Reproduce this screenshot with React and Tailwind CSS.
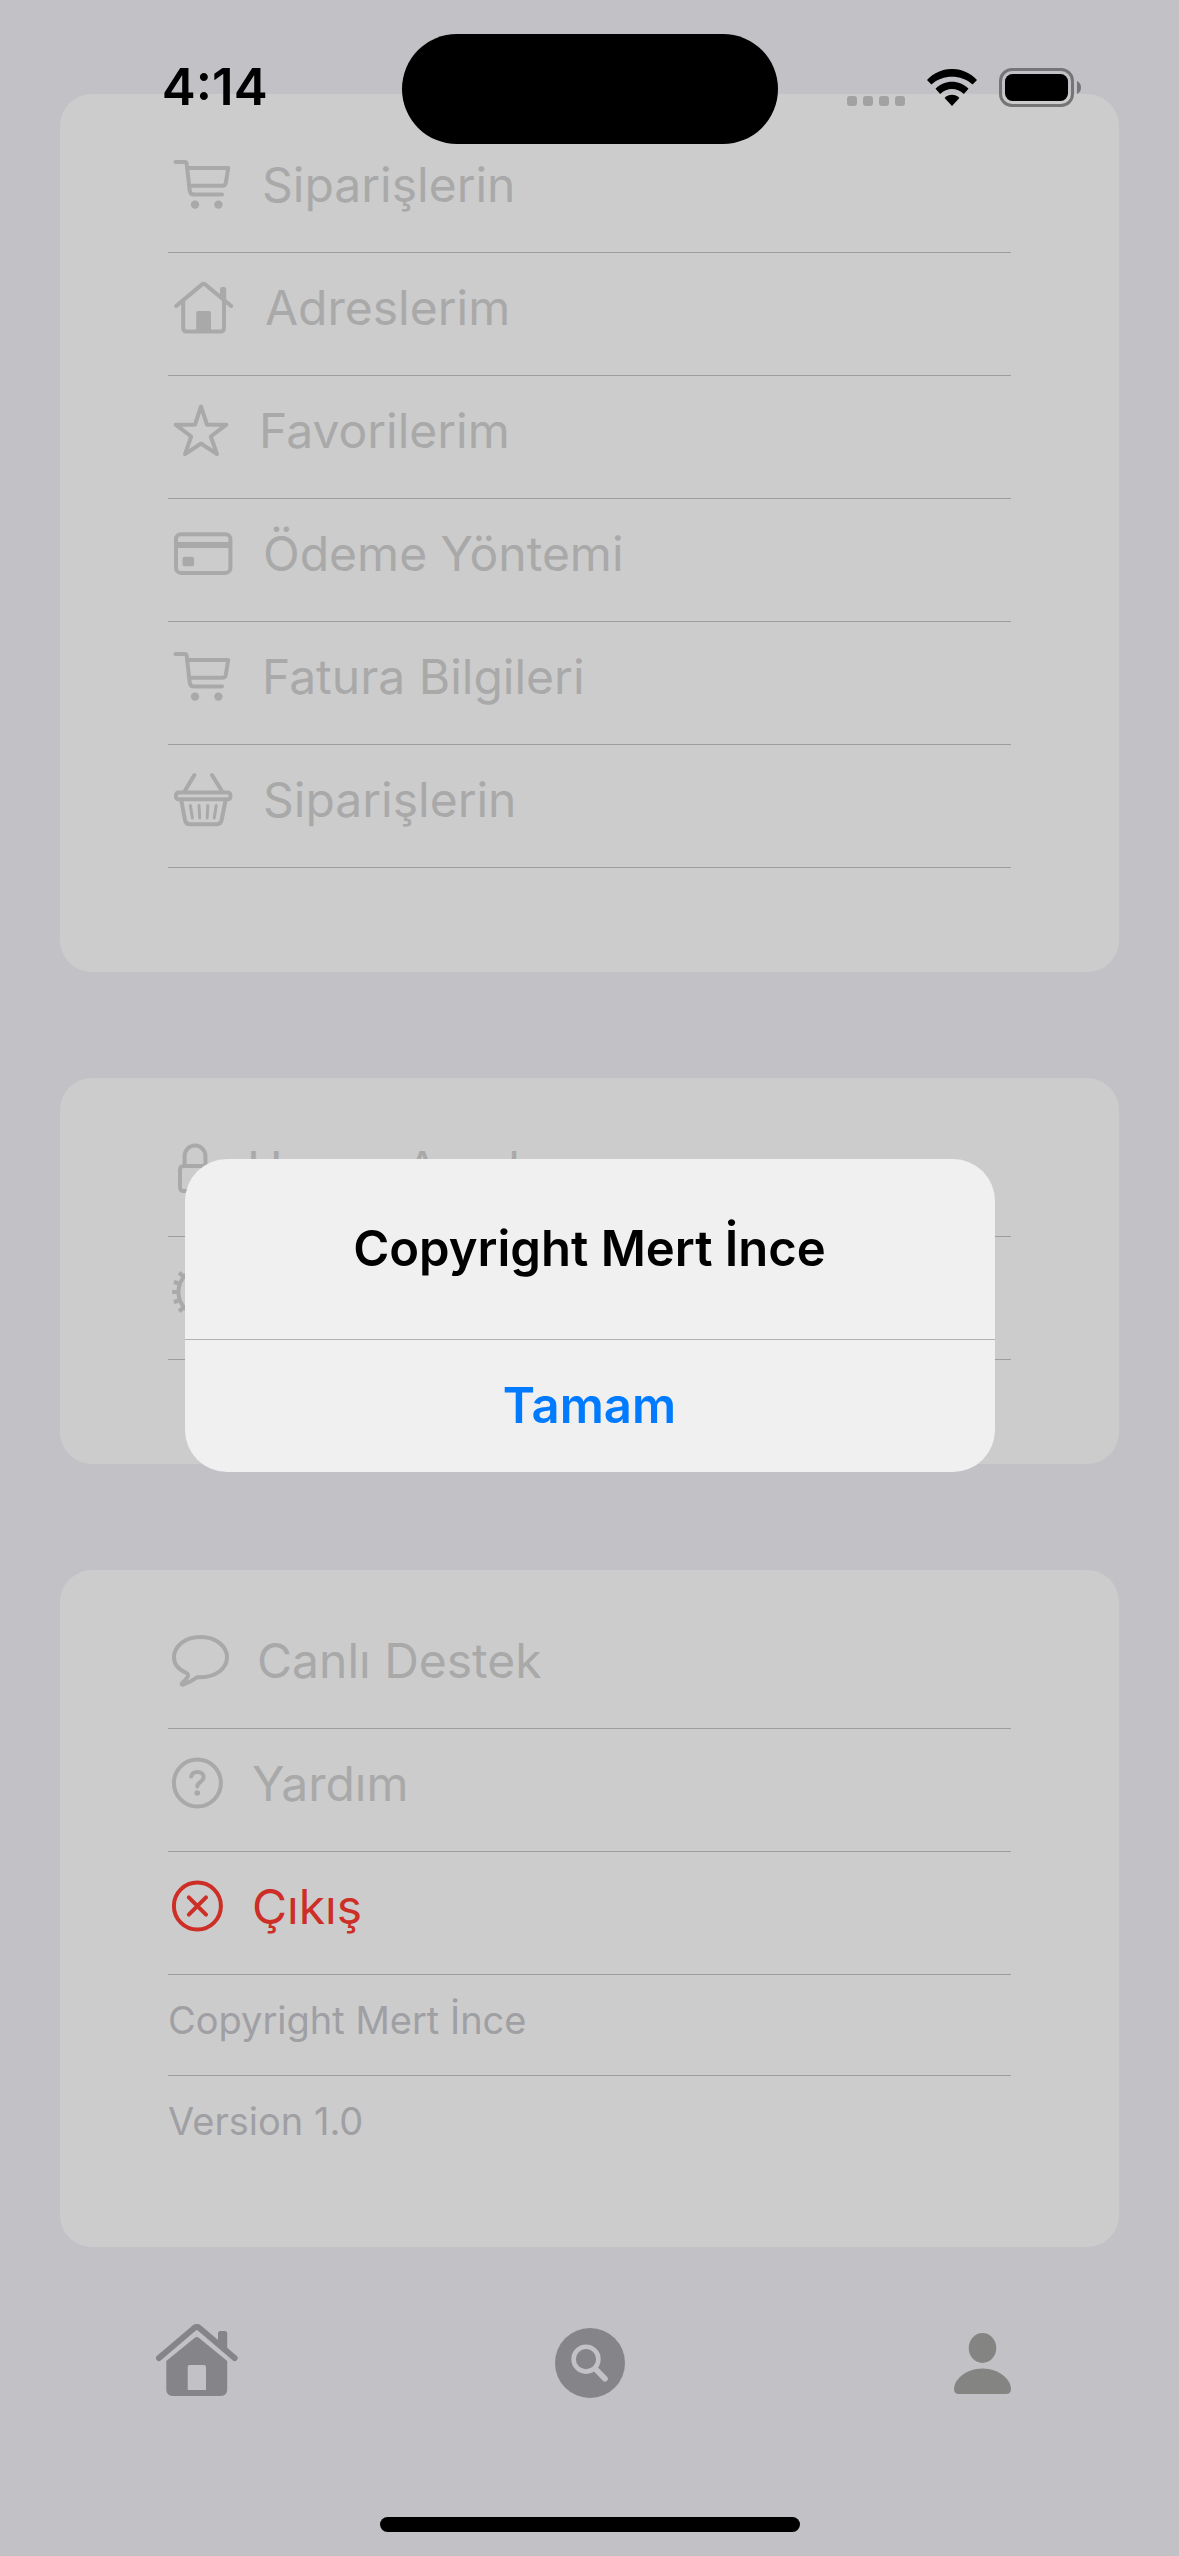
import React from 'react';

const Line = ({ width, children }) => (
  <svg
    width={width}
    height="70"
    viewBox={`0 0 ${width} 70`}
    fill="none"
    stroke="currentColor"
    strokeWidth="4"
    strokeLinecap="round"
    strokeLinejoin="round"
    aria-hidden="true"
    className="shrink-0"
  >
    {children}
  </svg>
);

const CartIcon = () => (
  <Line width={70}>
    <path d="M7.5 12H16.5Q18.4 12 18.7 13.8L21.7 40.5Q22.2 44.6 26 44.6H54" />
    <path d="M19.5 18H60.2L57.8 32.8Q57.2 35.8 54.2 35.8H21.5" />
    <circle cx="27" cy="54.6" r="4.2" fill="currentColor" stroke="none" />
    <circle cx="50.4" cy="54.6" r="4.2" fill="currentColor" stroke="none" />
  </Line>
);

const HouseIcon = () => (
  <Line width={73}>
    <path d="M8.2 33L33.8 11.6Q35.6 10 37.4 11.6L63.2 33" />
    <path d="M15.2 28V55Q15.2 58.6 18.8 58.6H52.4Q56 58.6 56 55V28" />
    <path d="M52 16Q52 14 54 14H56.2Q58.2 14 58.2 16V30L52 25Z" fill="currentColor" stroke="none" />
    <path d="M28.2 40Q28.2 38 30.2 38H41Q43 38 43 40V59H28.2Z" fill="currentColor" stroke="none" />
  </Line>
);

const StarIcon = () => (
  <Line width={67}>
    <path d="M33 10.5L39 28.7H58.4L42.8 40.5L49 58.2L33 47.5L17 58.2L23.2 40.5L7.6 28.7H27Z" />
  </Line>
);

const CardIcon = () => (
  <Line width={71}>
    <rect x="8" y="15.3" width="54.4" height="38.6" rx="5" />
    <path d="M8 23H62.4V29H8Z" fill="currentColor" stroke="none" />
    <rect x="14.5" y="37.8" width="11.6" height="9.4" rx="2" fill="currentColor" stroke="none" />
  </Line>
);

const BasketIcon = () => (
  <Line width={71}>
    <path d="M26.4 10L16.8 26M44 10L53.8 26" />
    <rect x="8" y="27.4" width="54.4" height="6.8" rx="2.5" />
    <path d="M13.4 36L17 55.2Q17.9 59.2 21.8 59.2H48.8Q52.8 59.2 53.6 55.2L57.4 36" />
    <path d="M22.4 40.4L24.4 53M31 40.4L31.7 53M39.8 40.4L39.2 53M48.2 40.4L46.2 53" strokeWidth="3" />
  </Line>
);

const LockIcon = () => (
  <Line width={55}>
    <rect x="12" y="32" width="30" height="25" rx="3.5" />
    <path d="M16.6 32V22A10.4 10.4 0 0 1 37.4 22V32" />
  </Line>
);

const GearIcon = () => (
  <Line width={67}>
    <circle cx="34" cy="35" r="23.6" />
    <circle cx="34" cy="35" r="27.4" strokeWidth="5" strokeLinecap="butt" pathLength="180" strokeDasharray="4.4 5.6" strokeDashoffset="2.2" />
    <path d="M34 35H57M34 35L22.5 15M34 35L22.5 55" />
  </Line>
);

const BubbleIcon = () => (
  <Line width={65}>
    <path d="M29.5 51.1Q22.5 56 15 58.7Q12.6 59 14.2 57Q18.8 53 20 50Q20.4 48 18.4 47C10.2 43.5 6 38 6 31.3C6 20 17.5 11 32.5 11S59 20 59 31.3S47.5 51.2 32.5 51.2Q31 51.2 29.5 51.1Z" />
  </Line>
);

const HelpIcon = () => (
  <Line width={60}>
    <circle cx="29.4" cy="34" r="23.5" />
    <path d="M23.2 27.6C23.8 24.4 26 23 29.4 23C33.2 23 35.6 25 35.6 28.2C35.6 32.6 29.3 33 29.3 37.4" />
    <circle cx="29.2" cy="44" r="2.8" fill="currentColor" stroke="none" />
  </Line>
);

const CloseIcon = () => (
  <Line width={60}>
    <circle cx="29.4" cy="34" r="23.5" />
    <path d="M20.8 25.4L38 42.6M38 25.4L20.8 42.6" />
  </Line>
);

function Section({ children, className }) {
  return (
    <ul className={`rounded-[32px] bg-[#cccccc] px-[108px] pt-9 ${className}`}>{children}</ul>
  );
}

function Row({ icon: Icon, label, hiddenLabel, tone = 'text-[#a9a9a9]' }) {
  return (
    <li className="border-b border-[#9d9d9e]">
      <button
        type="button"
        aria-label={hiddenLabel}
        className={`flex w-full items-center gap-6 pt-5 pb-8 text-left text-[48px] leading-[70px] ${tone}`}
      >
        <Icon />
        {label}
      </button>
    </li>
  );
}

function StatusBar() {
  return (
    <header className="absolute inset-x-0 top-0 z-20 flex h-[178px] items-center">
      <time className="flex-1 pb-1 pl-7 text-center text-[51px] leading-[60px] font-semibold text-black">4:14</time>
      <div className="h-[110px] w-[376px] rounded-full bg-black" />
      <div className="flex flex-1 items-center justify-center pr-7 pb-1">
        <div className="mt-7 mr-[22px] flex gap-1.5">
          <span className="size-2.5 rounded-[3px] bg-[#a2a2a2]" />
          <span className="size-2.5 rounded-[3px] bg-[#a2a2a2]" />
          <span className="size-2.5 rounded-[3px] bg-[#a2a2a2]" />
          <span className="size-2.5 rounded-[3px] bg-[#a2a2a2]" />
        </div>
        <svg width="50" height="37" viewBox="0 0 50 37" aria-hidden="true" className="mr-[22px]">
          <path d="M0 11C14-3.7 36-3.7 50 11L45.6 15.4C34 5.1 16 5.1 4.4 15.4Z" />
          <path d="M8.5 19.7C17.5 10.4 32.5 10.4 41.5 19.7L36.8 25C30 18.4 20 18.4 13.2 25Z" />
          <path d="M17.6 29C21.5 24.6 28.5 24.6 32.4 29L25 37Z" />
        </svg>
        <svg width="83" height="39" viewBox="0 0 83 39" aria-hidden="true">
          <rect x="1.5" y="1.5" width="72" height="36" rx="11.5" fill="none" stroke="#757577" strokeWidth="3" />
          <rect x="6" y="6" width="63" height="27" rx="7.5" />
          <path d="M78 13Q82 15 82 19.5T78 26Z" fill="#757577" />
        </svg>
      </div>
    </header>
  );
}

function TabBar() {
  return (
    <nav className="mt-14 grid grid-cols-3 text-[#858489]">
      <button type="button" aria-label="Ana Sayfa" className="flex h-[120px] items-center justify-center">
        <svg width="82" height="78" viewBox="0 0 82 78" fill="currentColor" aria-hidden="true">
          <path d="M3 34L38.2 4Q40.9 2 43.4 4L78.6 34" fill="none" stroke="currentColor" strokeWidth="6" strokeLinecap="round" />
          <path d="M62 17V9.5Q62 7 64.5 7H68.7Q71.2 7 71.2 9.5V26Z" />
          <path fillRule="evenodd" d="M38.8 13.8Q40.8 12 42.8 13.8L71.2 37V65.5Q71.2 72 64.7 72H16.8Q10.3 72 10.3 65.5V37ZM33.7 41Q31.7 41 31.7 43V66H50V43Q50 41 48 41Z" />
        </svg>
      </button>
      <button type="button" aria-label="Ara" className="flex h-[120px] items-center justify-center">
        <svg width="70" height="70" viewBox="0 0 70 70" fill="none" stroke="#c2c1c6" aria-hidden="true">
          <circle cx="35" cy="35" r="35" fill="currentColor" stroke="none" />
          <circle cx="31" cy="31.2" r="12.4" strokeWidth="4.6" />
          <path d="M40.5 41L50 50.8" strokeWidth="5.6" strokeLinecap="round" />
        </svg>
      </button>
      <button type="button" aria-label="Profil" className="flex h-[120px] items-center justify-center text-[#848583]">
        <svg width="57" height="61" viewBox="0 0 57 61" fill="currentColor" aria-hidden="true">
          <ellipse cx="28.5" cy="15" rx="13.8" ry="15" />
          <path d="M5 61Q0 61 0 56C0 47 11 35.4 28.5 35.4S57 47 57 56Q57 61 52 61Z" />
        </svg>
      </button>
    </nav>
  );
}

function Alert() {
  return (
    <div className="fixed inset-0 z-10 flex items-center justify-center px-6 pt-[177px] pb-[102px]">
      <div
        role="alertdialog"
        aria-labelledby="alert-title"
        className="w-full max-w-[810px] overflow-hidden rounded-[42px] bg-[#f0f0f0] text-center text-[49px] leading-[60px] font-semibold"
      >
        <h2 id="alert-title" className="border-b border-[#b1b1b1] py-[60px] text-black">
          Copyright Mert İnce
        </h2>
        <button type="button" className="w-full py-9 text-[#007aff]">
          Tamam
        </button>
      </div>
    </div>
  );
}

export default function App() {
  return (
    <div
      lang="tr"
      className="relative flex min-h-screen flex-col bg-[#c2c1c6] font-['Inter',sans-serif]"
    >
      <StatusBar />
      <main className="flex flex-col gap-[106px] px-[60px] pt-[94px]">
        <Section className="pb-[104px]">
          <Row icon={CartIcon} label="Siparişlerin" />
          <Row icon={HouseIcon} label="Adreslerim" />
          <Row icon={StarIcon} label="Favorilerim" />
          <Row icon={CardIcon} label="Ödeme Yöntemi" />
          <Row icon={CartIcon} label="Fatura Bilgileri" />
          <Row icon={BasketIcon} label="Siparişlerin" />
        </Section>
        <Section className="pb-[104px]">
          <Row icon={LockIcon} label="Hesap Ayarları" />
          <Row icon={GearIcon} hiddenLabel="Ayarlar" />
        </Section>
        <Section className="pb-[101px]">
          <Row icon={BubbleIcon} label="Canlı Destek" />
          <Row icon={HelpIcon} label="Yardım" />
          <Row icon={CloseIcon} label="Çıkış" tone="text-[#cd2e26]" />
          <li className="border-b border-[#9d9d9e] pt-5 pb-[30px] text-[38px] leading-[50px] text-[#9f9fa4]">
            Copyright Mert İnce
          </li>
          <li className="pt-5 text-[38px] leading-[50px] text-[#9f9fa4]">Version 1.0</li>
        </Section>
      </main>
      <TabBar />
      <div className="mt-auto flex justify-center pb-6">
        <div className="h-[15px] w-[420px] rounded-full bg-black" />
      </div>
      <Alert />
    </div>
  );
}
